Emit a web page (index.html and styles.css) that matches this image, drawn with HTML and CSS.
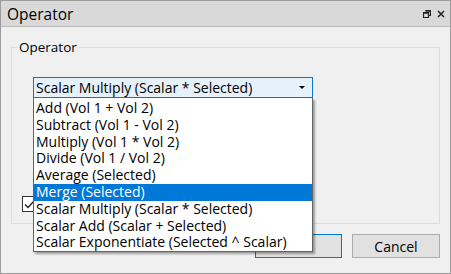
FILE: index.html
```html
<!DOCTYPE html>
<html>
<head>
<meta charset="utf-8">
<link rel="stylesheet" href="styles.css">
</head>
<body>
<div class="window">
  <div class="titlebar">
    <span class="title">Operator</span>
    <span class="tb-icons">
      <svg class="restore" width="8" height="8" viewBox="0 0 8 8"><path d="M2.5 0.5h5v5h-2M0.5 2.5h5v5h-5z" fill="none" stroke="#222" stroke-width="1.2"/><path d="M2.5 0.5h5v1.2h-5zM0.5 2.5h5v1.2h-5z" fill="#222"/></svg>
      <svg class="close" width="8" height="8" viewBox="0 0 8 8"><path d="M1 1L7 7M7 1L1 7" stroke="#222" stroke-width="1.5"/></svg>
    </span>
  </div>
  <div class="content">
    <fieldset class="group">
      <legend>Operator</legend>
      <div class="combo-wrap">
        <div class="combo">
          <span class="combo-text">Scalar Multiply (Scalar * Selected)</span>
          <span class="arrow"></span>
        </div>
        <ul class="list">
          <li>Add (Vol 1 + Vol 2)</li>
          <li>Subtract (Vol 1 - Vol 2)</li>
          <li>Multiply (Vol 1 * Vol 2)</li>
          <li>Divide (Vol 1 / Vol 2)</li>
          <li>Average (Selected)</li>
          <li class="sel">Merge (Selected)</li>
          <li>Scalar Multiply (Scalar * Selected)</li>
          <li>Scalar Add (Scalar + Selected)</li>
          <li>Scalar Exponentiate (Selected ^ Scalar)</li>
        </ul>
      </div>
      <div class="check-row">
        <span class="checkbox">
          <svg width="13" height="13" viewBox="0 0 13 13"><path d="M2 6.5L5 9.5L11 3" fill="none" stroke="#222" stroke-width="1.3"/></svg>
        </span>
      </div>
    </fieldset>
    <div class="buttons">
      <button class="btn ok">OK</button>
      <button class="btn">Cancel</button>
    </div>
  </div>
</div>
</body>
</html>
```

FILE: styles.css
```css
* { box-sizing: border-box; }
html, body { margin: 0; padding: 0; }
body {
  font-family: "Open Sans", "Noto Sans", sans-serif;
  font-size: 13px;
  color: #000;
  background: #f0f0f0;
}
.window {
  width: 451px;
  height: 274px;
  border: 1px solid #9c9c9c;
  background: #f0f0f0;
  display: flex;
  flex-direction: column;
  overflow: hidden;
}
.titlebar {
  height: 26px;
  background: #d9d9d9;
  border-bottom: 1px solid #b9b9b9;
  display: flex;
  align-items: center;
  justify-content: space-between;
  padding: 0 5px 0 6px;
  flex: none;
}
.title {
  font-size: 15.5px;
  line-height: 24px;
  color: #000;
}
.tb-icons {
  display: flex;
  gap: 6px;
  align-items: center;
}
.tb-icons svg { display: block; }
.content {
  flex: 1;
  display: flex;
  flex-direction: column;
  padding: 11px 10px 0 10px;
}
.group {
  margin: 0;
  padding: 21px 0 0 0;
  border: 1px solid #dcdcdc;
  height: 186px;
  min-width: 0;
}
.group legend {
  padding: 0 2px;
  margin-left: 5px;
  line-height: 18px;
  font-size: 13.5px;
}
.combo-wrap {
  position: relative;
  margin-left: 21px;
  width: 280px;
}
.combo {
  height: 21px;
  border: 1px solid #0078d7;
  background: #e5f1fb;
  display: flex;
  align-items: center;
  justify-content: space-between;
  padding: 0 7px 0 2px;
  font-size: 14px;
}
.arrow {
  width: 0;
  height: 0;
  border-left: 3px solid transparent;
  border-right: 3px solid transparent;
  border-top: 3px solid #000;
}
.list {
  position: absolute;
  left: 0;
  top: 100%;
  width: 280px;
  margin: 0;
  padding: 2px 0 0 0;
  list-style: none;
  background: #fff;
  border: 1px solid #646464;
  border-top: none;
  box-shadow: 2px 2px 2px rgba(0,0,0,0.35);
  z-index: 5;
  font-size: 14px;
}
.list li {
  height: 16.8px;
  line-height: 16.8px;
  padding-left: 2px;
  white-space: nowrap;
}
.list li.sel {
  background: #0078d7;
  color: #fff;
}
.check-row {
  margin-top: 98px;
  margin-left: 10px;
  display: flex;
  align-items: center;
}
.checkbox {
  width: 15px;
  height: 16px;
  border: 1px solid #333;
  background: #fff;
  display: flex;
  align-items: center;
  justify-content: center;
}
.checkbox svg { display: block; }
.buttons {
  margin-top: 10px;
  display: flex;
  justify-content: flex-end;
  gap: 10px;
}
.btn {
  width: 88px;
  height: 24px;
  border: 1px solid #adadad;
  background: #e1e1e1;
  font-family: inherit;
  font-size: 14px;
  color: #000;
  padding: 0;
}
.btn.ok {
  width: 87px;
  border: 1px solid #0078d7;
}
```
